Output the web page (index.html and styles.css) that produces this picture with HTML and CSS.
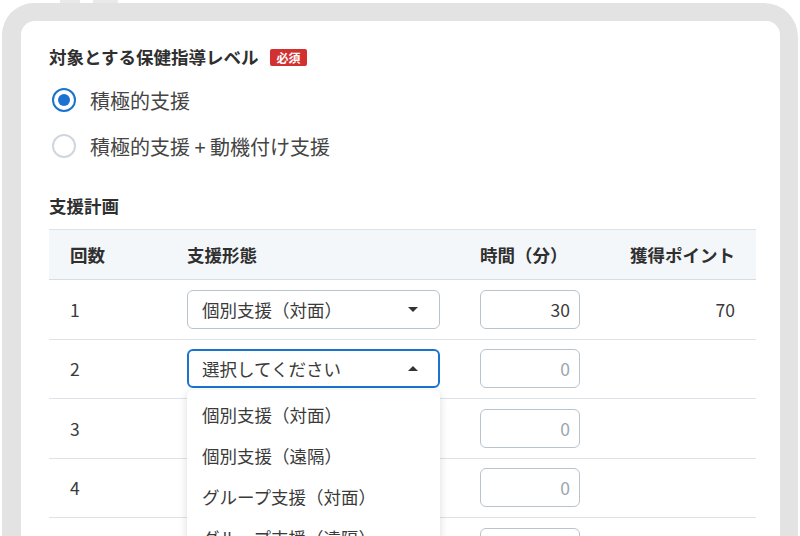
FILE: index.html
```html
<!DOCTYPE html>
<html lang="ja">
<head>
  <meta charset="UTF-8" />
  <meta name="viewport" content="width=device-width, initial-scale=1.0"/>
  <title>支援計画</title>
  <link rel="stylesheet" href="styles.css">
</head>
<body>
  <!-- 端末の上部ボタン -->
  <div class="device-top">
    <span class="hw-btn hw-btn-a"></span>
    <span class="hw-btn hw-btn-b"></span>
  </div>

  <div class="device">
    <div class="screen">

      <!-- 保健指導レベル -->
      <div class="field-title">
        <h2>対象とする保健指導レベル</h2>
        <span class="badge">必須</span>
      </div>
      <div class="radio-group">
        <label class="radio-row">
          <span class="radio checked"></span>
          積極的支援
        </label>
        <label class="radio-row">
          <span class="radio"></span>
          積極的支援 + 動機付け支援
        </label>
      </div>

      <!-- 支援計画 -->
      <h2 class="section-title">支援計画</h2>
      <table class="plan-table">
        <colgroup>
          <col class="col-no">
          <col class="col-type">
          <col class="col-time">
          <col class="col-point">
        </colgroup>
        <thead>
          <tr>
            <th>回数</th>
            <th>支援形態</th>
            <th>時間（分）</th>
            <th class="num">獲得ポイント</th>
          </tr>
        </thead>
        <tbody>
          <tr>
            <td>1</td>
            <td>
              <div class="select">
                <span>個別支援（対面）</span>
                <svg class="caret" width="10" height="5" viewBox="0 0 10 5"><path d="M0 0h10L5 5z" fill="#333"/></svg>
              </div>
            </td>
            <td><input class="time-input" type="text" value="30"></td>
            <td class="num">70</td>
          </tr>
          <tr>
            <td>2</td>
            <td>
              <div class="select-wrap">
                <div class="select open">
                  <span>選択してください</span>
                  <svg class="caret" width="10" height="5" viewBox="0 0 10 5"><path d="M0 5h10L5 0z" fill="#333"/></svg>
                </div>
                <ul class="dropdown">
                  <li>個別支援（対面）</li>
                  <li>個別支援（遠隔）</li>
                  <li>グループ支援（対面）</li>
                  <li>グループ支援（遠隔）</li>
                </ul>
              </div>
            </td>
            <td><input class="time-input" type="text" placeholder="0"></td>
            <td class="num"></td>
          </tr>
          <tr>
            <td>3</td>
            <td></td>
            <td><input class="time-input" type="text" placeholder="0"></td>
            <td class="num"></td>
          </tr>
          <tr>
            <td>4</td>
            <td></td>
            <td><input class="time-input" type="text" placeholder="0"></td>
            <td class="num"></td>
          </tr>
          <tr>
            <td>5</td>
            <td></td>
            <td><input class="time-input" type="text" placeholder="0"></td>
            <td class="num"></td>
          </tr>
        </tbody>
      </table>

    </div>
  </div>
</body>
</html>
```

FILE: styles.css
```css
* {
  margin: 0;
  padding: 0;
  box-sizing: border-box;
  font-family: 'Noto Sans CJK JP', 'Noto Sans', sans-serif;
}

body {
  height: 100vh;
  background-color: #fff;
  overflow: hidden;
  color: #3a3a3a;
}

/* 端末フレーム */
.device-top {
  display: flex;
  height: 3px;
  padding-left: 60px;
  gap: 13px;
}

.hw-btn {
  display: block;
  height: 3px;
  background-color: #e9e9e9;
  border-radius: 1px 1px 0 0;
}

.hw-btn-a {
  width: 20px;
}

.hw-btn-b {
  width: 25px;
}

.device {
  margin-left: 2px;
  width: 796px;
  height: 600px;
  background-color: #e3e3e3;
  border-radius: 32px 34px 0 0;
  padding: 18px 18px 0 19px;
}

.screen {
  height: 100%;
  background-color: #fff;
  border-radius: 14px 14px 0 0;
  padding: 23px 24px 0 28px;
}

/* 見出し */
.field-title {
  display: flex;
  align-items: center;
  gap: 12px;
}

.field-title h2,
.section-title {
  font-size: 17.5px;
  font-weight: bold;
  line-height: 26px;
  color: #2f2f2f;
}

.badge {
  background-color: #d33030;
  color: #fff;
  font-size: 12px;
  font-weight: bold;
  line-height: 17px;
  height: 17px;
  padding: 0 6px;
  border-radius: 2px;
}

/* ラジオ */
.radio-group {
  margin-top: 7px;
}

.radio-row {
  display: flex;
  align-items: center;
  height: 46px;
  gap: 14px;
  padding-left: 3px;
  font-size: 20px;
  color: #444;
}

.radio {
  width: 24px;
  height: 24px;
  border-radius: 50%;
  border: 2px solid #cfd7de;
  display: flex;
  align-items: center;
  justify-content: center;
}

.radio.checked {
  border: 2.5px solid #1a73d0;
}

.radio.checked::after {
  content: "";
  width: 12px;
  height: 12px;
  border-radius: 50%;
  background-color: #1a73d0;
}

.section-title {
  margin-top: 24px;
}

/* テーブル */
.plan-table {
  margin-top: 10px;
  width: 707px;
  border-collapse: collapse;
  table-layout: fixed;
  font-size: 17.5px;
  color: #3a3a3a;
}

.col-no { width: 117px; }
.col-type { width: 293px; }
.col-time { width: 141px; }
.col-point { width: 156px; }

.plan-table th {
  height: 50px;
  background-color: #f4f7f9;
  border-top: 1px solid #dbe2e8;
  border-bottom: 1px solid #d6dde3;
  text-align: left;
  font-weight: bold;
  color: #2f2f2f;
  padding-left: 21px;
}

.plan-table td {
  height: 59.5px;
  border-bottom: 1px solid #dde3e8;
  padding-left: 21px;
}

.plan-table .num {
  text-align: right;
  padding-right: 21px;
  padding-left: 0;
}

/* セレクト */
.select-wrap {
  position: relative;
}

.select {
  height: 39px;
  width: 253px;
  border: 1px solid #b9c3cc;
  border-radius: 6px;
  padding: 0 21px 0 14px;
  display: flex;
  align-items: center;
  justify-content: space-between;
  background-color: #fff;
  color: #3a3a3a;
}

.select.open {
  border: 2px solid #1a73d0;
  padding: 0 20px 0 13px;
}

.dropdown {
  position: absolute;
  top: 41px;
  left: 0;
  width: 253px;
  list-style: none;
  background-color: #fff;
  border-radius: 6px;
  box-shadow: 0 2px 10px rgba(0, 0, 0, 0.14);
  padding: 4px 0;
  z-index: 2;
}

.dropdown li {
  height: 41px;
  line-height: 41px;
  padding-left: 15px;
  color: #3a3a3a;
}

/* 時間入力 */
.time-input {
  width: 100px;
  height: 39px;
  border: 1px solid #b9c3cc;
  border-radius: 6px;
  text-align: right;
  padding-right: 9px;
  font-size: 17.5px;
  color: #3a3a3a;
  outline: none;
}

.time-input::placeholder {
  color: #9ba6b0;
}
```
